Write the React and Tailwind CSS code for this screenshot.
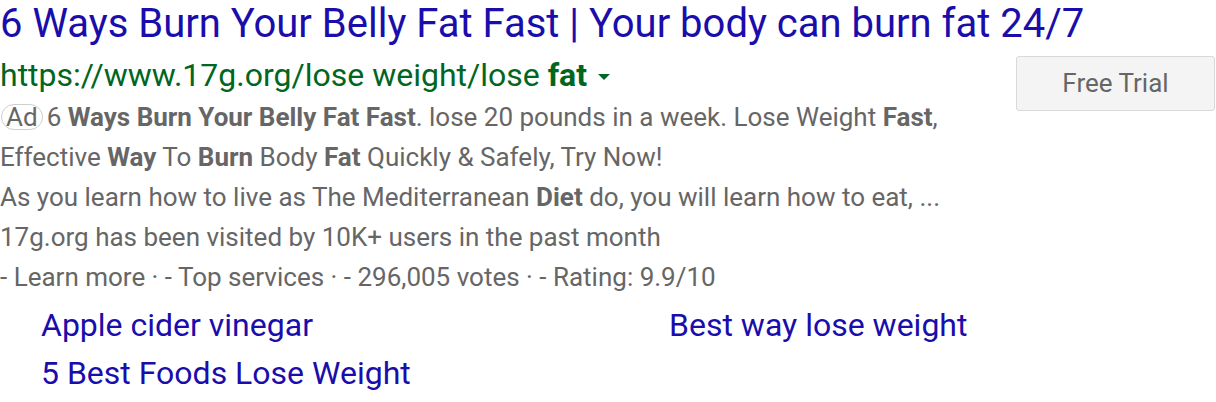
export default function App() {
  const font = { fontFamily: "Roboto, 'Liberation Sans', sans-serif" };
  return (
    <div className="w-[1216px] h-[402px] bg-white overflow-hidden" style={font}>
      <h1 className="text-[40px] leading-[48px] text-[#1a0dab] whitespace-nowrap">6 Ways Burn Your Belly Fat Fast | Your body can burn fat 24/7</h1>
      <div className="flex">
        <div className="flex-1">
          <div className="flex items-center mt-[7px] text-[32px] leading-[40px] text-[#006621] whitespace-nowrap">
            <span>
              https://www.17g.org/lose weight/lose <b>fat</b>
            </span>
            <span className="ml-[11px] mt-[4px] w-0 h-0 border-l-[6px] border-r-[6px] border-t-[6px] border-l-transparent border-r-transparent border-t-[#006621]"></span>
          </div>
          <div className="mt-[2px] text-[26px] leading-[40px] text-[#666] whitespace-nowrap">
            <p>
              <span className="inline-block border border-[#cfcfcf] rounded-[13px] px-[4px] leading-[24px] mr-[4px] ml-[1px]">Ad</span>6 <b>Ways Burn Your Belly Fat Fast</b>. lose 20 pounds in a week. Lose Weight <b>Fast</b>,
            </p>
            <p>
              Effective <b>Way</b> To <b>Burn</b> Body <b>Fat</b> Quickly &amp; Safely, Try Now!
            </p>
            <p>
              As you learn how to live as The Mediterranean <b>Diet</b> do, you will learn how to eat, ...
            </p>
            <p>17g.org has been visited by 10K+ users in the past month</p>
            <p>- Learn more · - Top services · - 296,005 votes · - Rating: 9.9/10</p>
          </div>
        </div>
        <div className="pt-[8px] pr-[1px]">
          <button className="w-[199px] h-[55px] bg-[#f4f4f4] border border-[#d9d9d9] rounded-[3px] text-[26px] text-[#666]">Free Trial</button>
        </div>
      </div>
      <div className="grid grid-cols-[628px_1fr] pl-[41px] mt-[4px] text-[32px] leading-[48px] text-[#1a0dab]">
        <a>Apple cider vinegar</a>
        <a>Best way lose weight</a>
        <a>5 Best Foods Lose Weight</a>
      </div>
    </div>
  );
}
